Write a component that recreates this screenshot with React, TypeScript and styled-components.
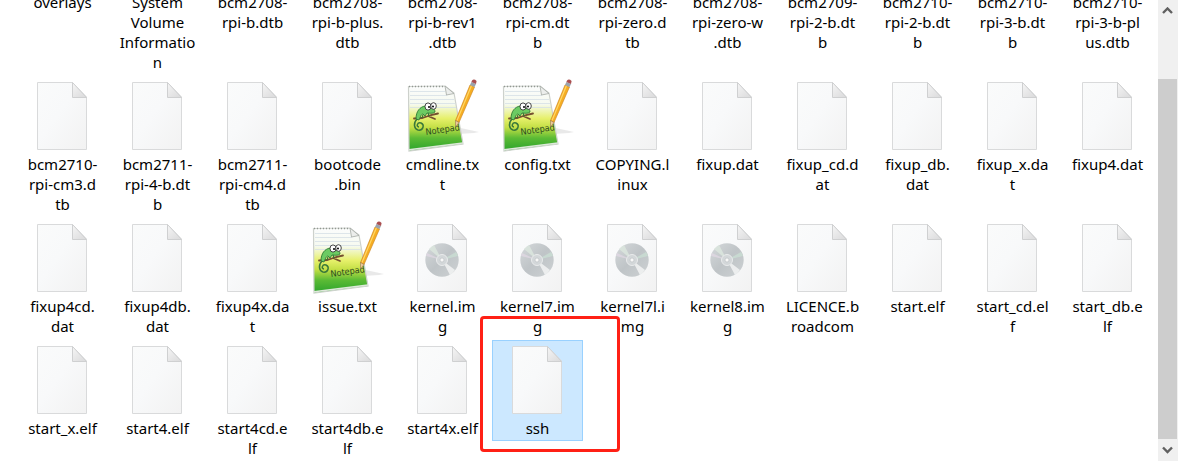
import React from "react";
import styled, { createGlobalStyle, css } from "styled-components";

const GlobalStyle = createGlobalStyle`
  *, *::before, *::after { box-sizing: border-box; }
  body {
    margin: 0;
    background: #fff;
    color: #000;
    font-family: "Noto Sans", "Open Sans", sans-serif;
    font-size: 15px;
    line-height: 20px;
  }
`;

const Window = styled.div`
  display: flex;
  height: 100vh;
  overflow: hidden;
`;

const FileGrid = styled.ul`
  flex: 1;
  min-width: 0;
  margin: 0;
  padding: 0 0 0 17px;
  list-style: none;
  display: grid;
  grid-template-columns: repeat(auto-fill, 91px);
  gap: 1px 4px;
  align-content: end;
  align-items: start;
`;

const Cell = styled.li<{ $spaced?: boolean }>`
  position: relative;
  padding-bottom: ${(p) => (p.$spaced ? "20px" : "0")};
`;

const FileTile = styled.button<{ $selected?: boolean }>`
  display: flex;
  flex-direction: column;
  align-items: center;
  gap: 4px;
  width: 100%;
  padding: 5px 0 2px;
  border: 1px solid transparent;
  background: none;
  color: inherit;
  font: inherit;
  ${(p) =>
    p.$selected &&
    css`
      background: #cce8ff;
      border-color: #99d1ff;
    `}
`;

const FileName = styled.span`
  white-space: pre;
  text-align: center;
`;

const Icon = styled.svg`
  display: block;
  width: 81px;
  height: 68px;
  overflow: visible;
`;

const Highlight = styled.div`
  position: absolute;
  z-index: 1;
  inset: -24px -37px 9px -12px;
  border: 3px solid #ff2015;
  border-radius: 4px;
  pointer-events: none;
`;

const ScrollBar = styled.div`
  display: flex;
  flex-direction: column;
  flex: none;
  width: 20px;
  padding-right: 1px;
  background: #f0f0f0;
`;

const ScrollButton = styled.button`
  display: grid;
  place-items: center;
  height: 22px;
  padding: 0;
  border: 0;
  background: none;
`;

const ScrollTrack = styled.div`
  flex: 1;
  display: flex;
  flex-direction: column;
  justify-content: flex-end;
`;

const ScrollThumb = styled.div`
  height: 86.4%;
  background: #cdcdcd;
`;

type Kind = "file" | "disc" | "note";

const Page = () => (
  <>
    <path d="M15.5 .5H50.5L64.5 15V67.5H15.5Z" fill="url(#paper)" stroke="#d9dadb" />
    <path d="M50.5 .5V15.5H64.5Z" fill="url(#fold)" stroke="#cfd0d1" strokeLinejoin="round" />
  </>
);

const Disc = () => (
  <>
    <circle cx="40" cy="36" r="16.7" fill="url(#disc)" />
    <path d="M40 36L27 25A17 17 0 0 1 32 21Z" fill="#dce7df" opacity=".8" />
    <path d="M40 36L48 51A17 17 0 0 0 53 46Z" fill="#f2f3f3" opacity=".85" />
    <path d="M40 36L25 29A17 17 0 0 0 24 32Z" fill="#e3d9e6" opacity=".7" />
    <path d="M40 36L54 28A17 17 0 0 1 56 32Z" fill="#cbe1d4" opacity=".7" />
    <circle cx="40" cy="36" r="5.5" fill="#d3d7d9" stroke="#e9ebec" />
    <circle cx="40" cy="36" r="2" fill="#f8f8f8" stroke="#b9bec1" strokeWidth=".6" />
  </>
);

const Note = () => (
  <>
    <path d="M54 45L77 50L72 51L56 52Z" fill="#cfcfcf" opacity=".45" />
    <path d="M6.5 4.5L43 4L52 11L61 62L7 69Z" fill="url(#note)" />
    <path d="M8 9.5H43M8 13.5H45M8 17.5H52M8 21.5H53M8 25.5H54" stroke="#d5e0e6" strokeWidth=".8" />
    <path d="M6.5 4.5L43 4L52 11L61 62L7 69Z" fill="none" stroke="#cdd1cc" strokeWidth="1.2" />
    <path d="M7 67.8L61 61" stroke="#dfe8dc" strokeWidth="1.6" />
    <path d="M7 4.5H42" stroke="#929892" strokeDasharray="1 2" strokeWidth="1.6" />
    <path d="M43 4L44.5 13L52 11.5Z" fill="#eceeec" stroke="#a5aaa5" strokeWidth=".8" />
    <path d="M12 36.5L20 36L29 33L36 31.5M26 34L33 37" fill="none" stroke="#75502f" strokeWidth="1.8" strokeLinecap="round" />
    <path d="M14 37C14 29 18 25 23 24C28 23 33 26 33 30C31 32 27 31 25 31L23 34L21 32C19 32 18 36 17 38Z" fill="#6ccb62" stroke="#2f7a35" strokeWidth=".9" />
    <path d="M15 37C11 41 12 47 16 48C21 49 23 43 19 41C15 40 14 45 17 45" fill="none" stroke="#39783a" strokeWidth="1.5" />
    <path d="M21 33L20 36M26 31L27 34" stroke="#2f7a35" strokeWidth="1.2" />
    <ellipse cx="26" cy="24.5" rx="3" ry="3.6" fill="#fff" stroke="#333" strokeWidth=".9" />
    <ellipse cx="31.5" cy="24" rx="2.8" ry="3.3" fill="#fff" stroke="#333" strokeWidth=".9" />
    <circle cx="27" cy="25" r="1" />
    <circle cx="31" cy="24.5" r="1" />
    <text x="24" y="53" fill="#2c4a20" fontFamily="Liberation Sans Narrow, DejaVu Sans Condensed, sans-serif" fontSize="9" transform="rotate(-8 24 53)">Notepad</text>
  </>
);

const Pencil = () => (
  <>
    <path d="M53.5 38.5L68 3L72.5 5L57 40.5Z" fill="#f6ae22" stroke="#c9801d" strokeWidth=".6" />
    <path d="M55 38.5L69.3 4" stroke="#ffd768" strokeWidth="1.2" />
    <path d="M53.5 38.5L57 40.5L53.5 45Z" fill="#edc99b" stroke="#886647" strokeWidth=".5" />
    <path d="M68 3L69.4 0L74 2L72.5 5Z" fill="#9aa4ad" />
    <path d="M69.4 0L70-1.6Q72-3.6 74.6-1L74 2Z" fill="#aa4f50" />
  </>
);

const icons: Record<Kind, React.ReactNode> = {
  file: <Page />,
  disc: <><Page /><Disc /></>,
  note: <><Note /><Pencil /></>,
};

const Defs = styled.svg`
  position: absolute;
  width: 0;
  height: 0;
`;

const IconDefs = () => (
  <Defs aria-hidden="true">
    <defs>
      <linearGradient id="paper" x2="1" y2="1">
        <stop stopColor="#fafbfb" /><stop offset=".45" stopColor="#f8f9fa" /><stop offset="1" stopColor="#f2f2f2" />
      </linearGradient>
      <linearGradient id="fold" x2=".8" y2="1">
        <stop stopColor="#f6f6f6" /><stop offset="1" stopColor="#dcdcdd" />
      </linearGradient>
      <linearGradient id="disc" x2="1" y2="1">
        <stop stopColor="#d5d9db" /><stop offset=".5" stopColor="#bfc4c7" /><stop offset="1" stopColor="#cdd1d3" />
      </linearGradient>
      <linearGradient id="note" x2="0" y2="1">
        <stop stopColor="#fbfcfc" /><stop offset=".28" stopColor="#f6faf0" /><stop offset=".5" stopColor="#e6f06a" />
        <stop offset=".64" stopColor="#c3df45" /><stop offset=".8" stopColor="#5cbb35" /><stop offset="1" stopColor="#2ba32c" />
      </linearGradient>
    </defs>
  </Defs>
);

const files: { name: string; kind?: Kind }[] = [
  { name: "overlays" },
  { name: "System\nVolume\nInformatio\nn" },
  { name: "bcm2708-\nrpi-b.dtb" },
  { name: "bcm2708-\nrpi-b-plus.\ndtb" },
  { name: "bcm2708-\nrpi-b-rev1\n.dtb" },
  { name: "bcm2708-\nrpi-cm.dt\nb" },
  { name: "bcm2708-\nrpi-zero.d\ntb" },
  { name: "bcm2708-\nrpi-zero-w\n.dtb" },
  { name: "bcm2709-\nrpi-2-b.dt\nb" },
  { name: "bcm2710-\nrpi-2-b.dt\nb" },
  { name: "bcm2710-\nrpi-3-b.dt\nb" },
  { name: "bcm2710-\nrpi-3-b-pl\nus.dtb" },
  { name: "bcm2710-\nrpi-cm3.d\ntb" },
  { name: "bcm2711-\nrpi-4-b.dt\nb" },
  { name: "bcm2711-\nrpi-cm4.d\ntb" },
  { name: "bootcode\n.bin" },
  { name: "cmdline.tx\nt", kind: "note" },
  { name: "config.txt", kind: "note" },
  { name: "COPYING.l\ninux" },
  { name: "fixup.dat" },
  { name: "fixup_cd.d\nat" },
  { name: "fixup_db.\ndat" },
  { name: "fixup_x.da\nt" },
  { name: "fixup4.dat" },
  { name: "fixup4cd.\ndat" },
  { name: "fixup4db.\ndat" },
  { name: "fixup4x.da\nt" },
  { name: "issue.txt", kind: "note" },
  { name: "kernel.im\ng", kind: "disc" },
  { name: "kernel7.im\ng", kind: "disc" },
  { name: "kernel7l.i\nmg", kind: "disc" },
  { name: "kernel8.im\ng", kind: "disc" },
  { name: "LICENCE.b\nroadcom" },
  { name: "start.elf" },
  { name: "start_cd.el\nf" },
  { name: "start_db.e\nlf" },
  { name: "start_x.elf" },
  { name: "start4.elf" },
  { name: "start4cd.e\nlf" },
  { name: "start4db.e\nlf" },
  { name: "start4x.elf" },
  { name: "ssh" },
];

export default function App() {
  return (
    <Window>
      <GlobalStyle />
      <IconDefs />
      <FileGrid>
        {files.map(({ name, kind = "file" }) => {
          const selected = name === "ssh";
          return (
            <Cell key={name} $spaced={selected}>
              <FileTile $selected={selected}>
                <Icon viewBox="0 0 81 68" aria-hidden="true">{icons[kind]}</Icon>
                <FileName>{name}</FileName>
              </FileTile>
              {selected && <Highlight />}
            </Cell>
          );
        })}
      </FileGrid>
      <ScrollBar>
        <ScrollButton aria-label="Scroll up">
          <svg width="11" height="8" viewBox="0 0 11 8"><path d="M1 6L5.5 1.5L10 6" fill="none" stroke="#606060" strokeWidth="2.4" /></svg>
        </ScrollButton>
        <ScrollTrack><ScrollThumb /></ScrollTrack>
        <ScrollButton aria-label="Scroll down">
          <svg width="11" height="8" viewBox="0 0 11 8"><path d="M1 1.5L5.5 6L10 1.5" fill="none" stroke="#606060" strokeWidth="2.4" /></svg>
        </ScrollButton>
      </ScrollBar>
    </Window>
  );
}
